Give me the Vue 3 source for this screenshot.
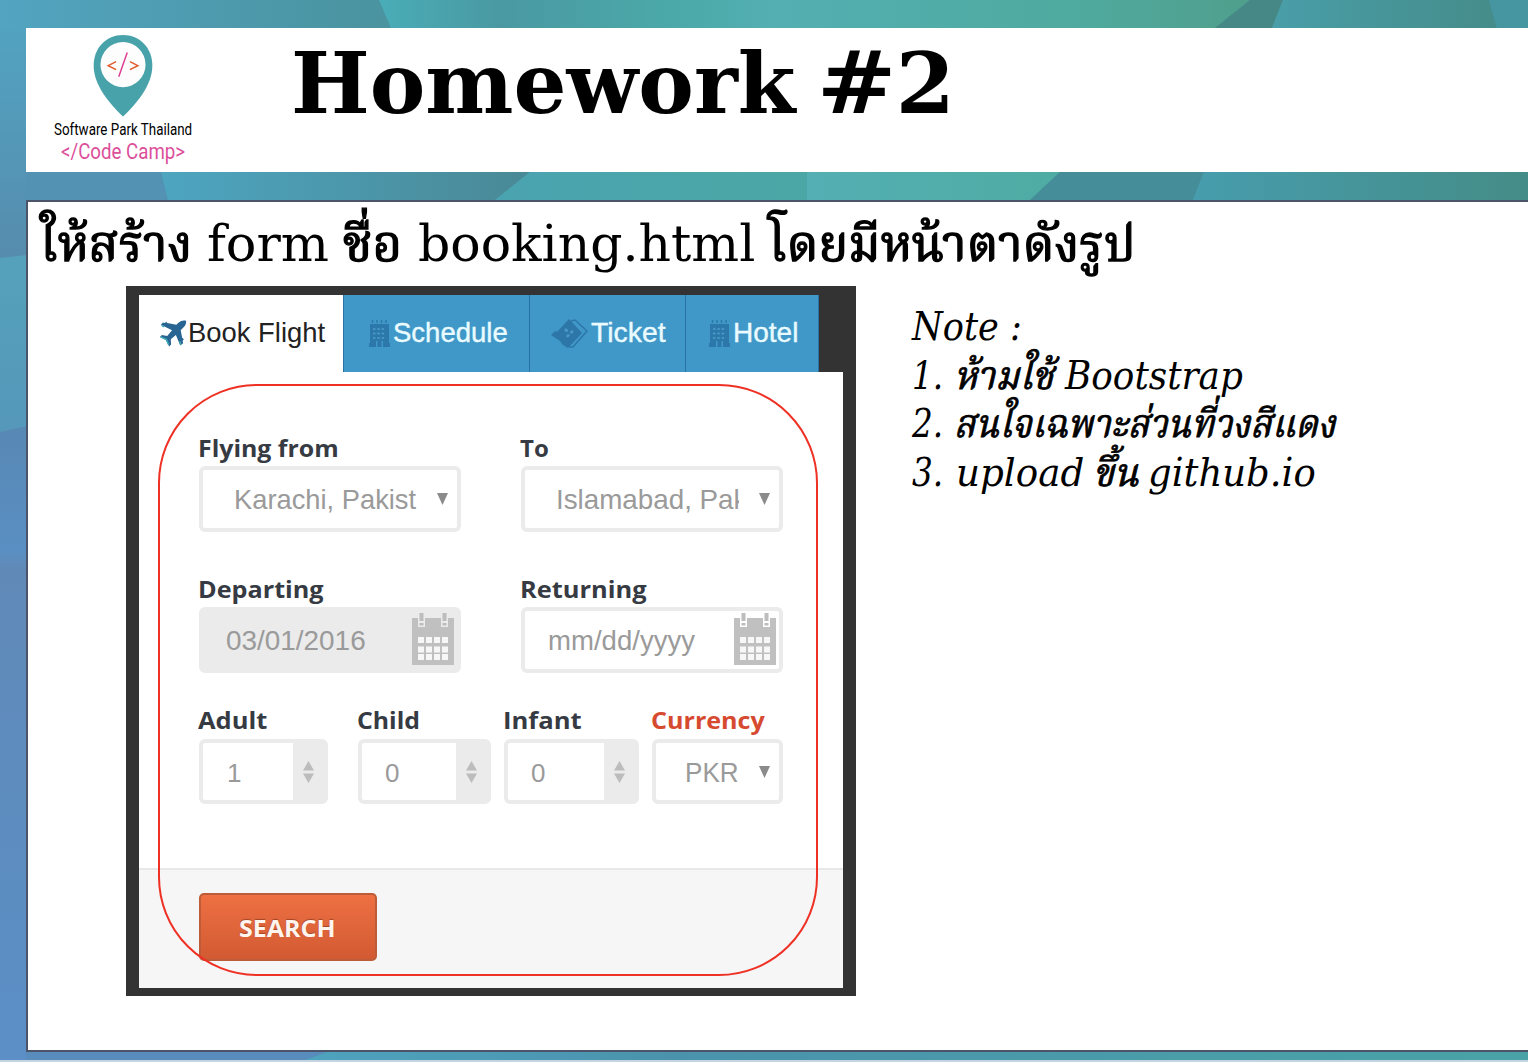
<script setup>
// Stretches a run of text horizontally so that it spans the given width.
const vFit = {
  mounted(el, { value }) {
    const natural = el.offsetWidth
    if (!natural) return
    el.style.transform = `scaleX(${value / natural})`
    el.style.marginRight = `${value - natural}px`
  },
}

const heading = [
  { text: 'ให้สร้าง', width: 152, gap: 0, thai: true },
  { text: 'form', width: 122, gap: 15 },
  { text: 'ชื่อ', width: 59, gap: 14, thai: true },
  { text: 'booking.html', width: 337, gap: 16 },
  { text: 'โดยมีหน้าตาดังรูป', width: 367, gap: 12, thai: true },
]

const notes = [
  [{ text: 'Note :', width: 110, gap: 0 }],
  [
    { text: '1.', width: 31, gap: 0 },
    { text: 'ห้ามใช้', width: 100, gap: 11, thai: true },
    { text: 'Bootstrap', width: 178, gap: 11 },
  ],
  [
    { text: '2.', width: 31, gap: 0 },
    { text: 'สนใจเฉพาะส่วนที่วงสีแดง', width: 382, gap: 11, thai: true },
  ],
  [
    { text: '3.', width: 31, gap: 0 },
    { text: 'upload', width: 128, gap: 13 },
    { text: 'ขึ้น', width: 46, gap: 9, thai: true },
    { text: 'github.io', width: 168, gap: 9 },
  ],
]

const counters = [
  { label: 'Adult', value: '1', cls: 'adult', fit: 69 },
  { label: 'Child', value: '0', cls: 'child', fit: 63 },
  { label: 'Infant', value: '0', cls: 'infant', fit: 79 },
]
</script>

<template>
  <div class="slide">
    <svg class="backdrop" viewBox="0 0 1528 1062" preserveAspectRatio="none" aria-hidden="true">
      <defs>
        <linearGradient id="gTop" gradientUnits="userSpaceOnUse" x1="0" x2="390"><stop offset="0" stop-color="#52a4c0" /><stop offset="1" stop-color="#4a939f" /></linearGradient>
        <linearGradient id="gTop2" gradientUnits="userSpaceOnUse" x1="379" x2="1250"><stop offset="0" stop-color="#49adb7" /><stop offset=".14" stop-color="#4a99a2" /><stop offset=".34" stop-color="#4ba9a9" /><stop offset=".45" stop-color="#53afb2" /><stop offset=".8" stop-color="#4faa9f" /><stop offset="1" stop-color="#509f8c" /></linearGradient>
        <linearGradient id="gTop3" gradientUnits="userSpaceOnUse" x1="1272" x2="1497"><stop offset="0" stop-color="#499ea8" /><stop offset="1" stop-color="#458c8a" /></linearGradient>
        <linearGradient id="gMid" gradientUnits="userSpaceOnUse" x1="161" x2="530"><stop offset="0" stop-color="#4da5c0" /><stop offset="1" stop-color="#4a8996" /></linearGradient>
        <linearGradient id="gMid2" gradientUnits="userSpaceOnUse" x1="495" x2="807"><stop offset="0" stop-color="#4aa3b0" /><stop offset="1" stop-color="#4ba7a5" /></linearGradient>
        <linearGradient id="gMid3" gradientUnits="userSpaceOnUse" x1="807" x2="1060"><stop offset="0" stop-color="#53afb3" /><stop offset="1" stop-color="#4eaca3" /></linearGradient>
        <linearGradient id="gMid4" gradientUnits="userSpaceOnUse" x1="1193" x2="1528"><stop offset="0" stop-color="#479dad" /><stop offset="1" stop-color="#448c87" /></linearGradient>
        <linearGradient id="gLeft" gradientUnits="userSpaceOnUse" x1="0" x2="0" y1="28" y2="258"><stop offset="0" stop-color="#52a3c0" /><stop offset="1" stop-color="#568cae" /></linearGradient>
        <linearGradient id="gLeft2" gradientUnits="userSpaceOnUse" x1="0" x2="0" y1="258" y2="430"><stop offset="0" stop-color="#55a1bb" /><stop offset="1" stop-color="#5598b9" /></linearGradient>
        <linearGradient id="gLeft3" gradientUnits="userSpaceOnUse" x1="0" x2="0" y1="430" y2="1062"><stop offset="0" stop-color="#5888b4" /><stop offset=".19" stop-color="#5a8fc3" /><stop offset=".22" stop-color="#6089b7" /><stop offset=".5" stop-color="#5e8cbe" /><stop offset="1" stop-color="#5b8fc6" /></linearGradient>
        <linearGradient id="gBottom" gradientUnits="userSpaceOnUse" x1="300" x2="1528"><stop offset="0" stop-color="#4fa3bd" /><stop offset=".3" stop-color="#4b93ad" /><stop offset="1" stop-color="#49a3a6" /></linearGradient>
      </defs>
      <rect width="1528" height="1062" fill="#4b98a5" />
      <rect width="391" height="28" fill="url(#gTop)" />
      <path d="M379 0H1250L1215 28H391Z" fill="url(#gTop2)" />
      <path d="M1250 0H1283L1272 28H1215Z" fill="#458885" />
      <path d="M1283 0H1489L1497 28H1272Z" fill="url(#gTop3)" />
      <path d="M1489 0H1528V28H1497Z" fill="#4596a1" />
      <rect y="28" width="27" height="231" fill="url(#gLeft)" />
      <path d="M26 172H161L168 200H26Z" fill="#5492b4" />
      <path d="M161 172H530L495 200H168Z" fill="url(#gMid)" />
      <path d="M530 172H808V200H495Z" fill="url(#gMid2)" />
      <path d="M807 172H1060L1030 200H807Z" fill="url(#gMid3)" />
      <path d="M1060 172H1204L1193 200H1030Z" fill="#458e99" />
      <path d="M1204 172H1528V200H1193Z" fill="url(#gMid4)" />
      <path d="M0 258L27 255V432H0Z" fill="url(#gLeft2)" />
      <path d="M0 432L27 426V1062H0Z" fill="url(#gLeft3)" />
      <path d="M26 1051H330L300 1062H26Z" fill="#588cbd" />
      <path d="M330 1051H1528V1062H300Z" fill="url(#gBottom)" />
      <rect y="1060" width="1528" height="2" fill="#c3d4e2" />
    </svg>

    <header class="banner">
      <div class="logo">
        <svg class="pin" viewBox="0 0 60 83" aria-hidden="true">
          <path d="M30 0C13 0 .3 13 .3 31C.3 51 17 70 30 82.500C43 70 59.700 51 59.700 31C59.700 13 47 0 30 0Z" fill="#48a2a9" />
          <circle cx="30" cy="30" r="22.800" fill="#fdfdfd" />
          <path d="M23 27L15 31L23 35M37 27L45 31L37 35" fill="none" stroke="#e0592a" stroke-width="1.500" />
          <path d="M34.300 17.800L25.700 42.200" stroke="#dc3f92" stroke-width="1.500" />
        </svg>
        <div class="org"><span v-fit="138" class="run">Software Park Thailand</span></div>
        <div class="camp"><span v-fit="124" class="run">&lt;/Code Camp&gt;</span></div>
      </div>
      <h1 class="title"><span v-fit="505" class="run">Homework</span><span v-fit="79" class="run hash">#</span><span v-fit="59" class="run">2</span></h1>
    </header>

    <main class="sheet">
      <p class="heading">
        <span v-for="(w, i) in heading" :key="i" :style="{ paddingLeft: w.gap + 'px' }"><span v-fit="w.width" class="run" :class="{ thai: w.thai }">{{ w.text }}</span></span>
      </p>

      <div class="columns">
        <section class="photo">
          <nav class="tabs">
            <div class="tab active">
              <svg class="plane" viewBox="0 0 28 28" aria-hidden="true">
                <path d="M27.500 .8C25 -.2 22 .7 20 2.700L17.500 5L8 3.200L7 1.800L5.500 3L3.500 2.500L1.500 5L13 10.500L8 16.500L2.500 15.500L.5 17.500L6.500 20.800L10 27.500L12 25.500L11.700 20L17 15.500L21.500 26.500L24.500 24L24 21.500L25.300 20L23.500 18.500L22 10.700L25 7.500C27.200 5.300 28 3 27.500 .8Z" fill="#286592" />
                <path d="M2 5.500L5 7M1 17.500L7 20L9.500 25.500M21 22L22 25.500" stroke="#42aab8" stroke-width="1.500" fill="none" />
              </svg>
              <span v-fit="137" class="run">Book Flight</span>
            </div>
            <div class="tab schedule">
              <svg class="building" viewBox="0 0 21 27" aria-hidden="true">
                <path d="M1 4H20V23H21V27H14V21H12.500V27H8.500V21H7V27H0V23H1Z" fill="#2c78ab" />
                <path d="M3.500 0V3M8 0V3M12.500 0V3M17 0V3" stroke="#2c78ab" stroke-width="1.500" />
                <path d="M4 9H17M4 13.500H17M4 18H17" stroke="#4b9fc9" stroke-width="1.500" stroke-dasharray="2.500 1.800" />
              </svg>
              <span v-fit="115" class="run">Schedule</span>
            </div>
            <div class="tab ticket">
              <svg class="tickets" viewBox="0 0 37 29" aria-hidden="true">
                <path d="M0 16L4 12L6 13L18 0L31 14L17 29L12 26L9 22L6 20Z" fill="#2c76a8" />
                <path d="M20 2L24 1L36 12L22 28L18 28" fill="none" stroke="#2c76a8" stroke-width="1.500" />
                <path d="M14 10L16.500 12.500M22 12L19.500 14M16 18L18 15.500" fill="none" stroke="#4a9ac5" stroke-width="2.500" />
              </svg>
              <span v-fit="75" class="run">Ticket</span>
            </div>
            <div class="tab hotel">
              <svg class="building" viewBox="0 0 21 27" aria-hidden="true">
                <path d="M1 4H20V23H21V27H14V21H12.500V27H8.500V21H7V27H0V23H1Z" fill="#2c78ab" />
                <path d="M3.500 0V3M8 0V3M12.500 0V3M17 0V3" stroke="#2c78ab" stroke-width="1.500" />
                <path d="M4 9H17M4 13.500H17M4 18H17" stroke="#4b9fc9" stroke-width="1.500" stroke-dasharray="2.500 1.800" />
              </svg>
              <span v-fit="65" class="run">Hotel</span>
            </div>
          </nav>

          <form class="form" @submit.prevent>
            <div class="row">
              <div class="cell wide">
                <label><span v-fit="141" class="run">Flying from</span></label>
                <div class="box select"><span class="clip"><span v-fit="182" class="run">Karachi, Pakist</span></span><svg class="caret" viewBox="0 0 11 12"><path d="M0 0H11L5.500 12Z" /></svg></div>
              </div>
              <div class="cell wide">
                <label><span v-fit="29" class="run">To</span></label>
                <div class="box select"><span class="clip"><span v-fit="191" class="run">Islamabad, Pak</span></span><svg class="caret" viewBox="0 0 11 12"><path d="M0 0H11L5.500 12Z" /></svg></div>
              </div>
            </div>
            <div class="row dates">
              <div class="cell wide">
                <label><span v-fit="126" class="run">Departing</span></label>
                <div class="box date disabled">
                  <span v-fit="140" class="run">03/01/2016</span>
                  <svg class="calendar" viewBox="0 0 42 52"><path d="M0 5H42V52H0Z" fill="#c0c0c0" /><path d="M6 0H13V14H6ZM29 0H36V14H29Z" class="gap" /><path d="M7.500 0H11.500V8H7.500ZM30.500 0H34.500V8H30.500ZM7.500 10H11.500V12.500H7.500ZM30.500 10H34.500V12.500H30.500Z" fill="#bdbdbd" /><path d="M6 27H36M6 36.500H36M6 44H36" class="days" /></svg>
                </div>
              </div>
              <div class="cell wide">
                <label><span v-fit="127" class="run">Returning</span></label>
                <div class="box date">
                  <span v-fit="147" class="run">mm/dd/yyyy</span>
                  <svg class="calendar" viewBox="0 0 42 52"><path d="M0 5H42V52H0Z" fill="#c0c0c0" /><path d="M6 0H13V14H6ZM29 0H36V14H29Z" class="gap" /><path d="M7.500 0H11.500V8H7.500ZM30.500 0H34.500V8H30.500ZM7.500 10H11.500V12.500H7.500ZM30.500 10H34.500V12.500H30.500Z" fill="#bdbdbd" /><path d="M6 27H36M6 36.500H36M6 44H36" class="days" /></svg>
                </div>
              </div>
            </div>
            <div class="row people">
              <div v-for="c in counters" :key="c.label" class="cell" :class="c.cls">
                <label><span v-fit="c.fit" class="run">{{ c.label }}</span></label>
                <div class="box counter">
                  <span class="num">{{ c.value }}</span>
                  <span class="stepper"><svg viewBox="0 0 11 22"><path d="M5.500 0L11 9.500H0ZM0 12.500H11L5.500 22Z" fill="#bcbcbc" /></svg></span>
                </div>
              </div>
              <div class="cell currency">
                <label><span v-fit="114" class="run">Currency</span></label>
                <div class="box select"><span class="clip"><span v-fit="54" class="run">PKR</span></span><svg class="caret" viewBox="0 0 11 12"><path d="M0 0H11L5.500 12Z" /></svg></div>
              </div>
            </div>
          </form>

          <footer class="actions">
            <button type="submit" class="search"><span v-fit="97" class="run">SEARCH</span></button>
          </footer>
          <div class="ring"></div>
        </section>

        <aside class="notes">
          <p v-for="(line, n) in notes" :key="n">
            <span v-for="(w, i) in line" :key="i" :style="{ paddingLeft: w.gap + 'px' }"><span v-fit="w.width" class="run" :class="{ thai: w.thai }">{{ w.text }}</span></span>
          </p>
        </aside>
      </div>
    </main>
  </div>
</template>

<style>
body {
  margin: 0;
  overflow: hidden;
}
</style>

<style scoped>
.slide {
  position: relative;
  box-sizing: border-box;
  width: 1528px;
  height: 1062px;
  padding: 28px 0 0 26px;
  overflow: hidden;
  color: #000;
}
.backdrop {
  position: absolute;
  inset: 0;
  width: 1528px;
  height: 1062px;
}
.run {
  display: inline-block;
  white-space: pre;
  transform-origin: 0 50%;
}
.banner {
  position: relative;
  display: flex;
  height: 144px;
  background: #fff;
}
.logo {
  width: 193px;
  padding-top: 7px;
  display: flex;
  flex-direction: column;
  align-items: center;
  font-family: Roboto, sans-serif;
  white-space: nowrap;
}
.pin {
  width: 60px;
  height: 82px;
}
.org {
  height: 22px;
  margin: 2px 0 0 1px;
  line-height: 22px;
  font-size: 16px;
}
.camp {
  height: 22px;
  margin-left: 1px;
  line-height: 22px;
  font-size: 22px;
  color: #dc4f9b;
}
.title {
  display: flex;
  margin: 0 0 0 72px;
  font: bold 85px/110px "DejaVu Serif", serif;
  white-space: nowrap;
}
.hash {
  margin-left: 21px;
  font-weight: normal;
  -webkit-text-stroke: 2px #000;
}
.sheet {
  position: relative;
  box-sizing: border-box;
  width: 1504px;
  height: 852px;
  margin-top: 28px;
  border: 2px solid #4b5468;
  background: #fff;
}
.heading {
  display: flex;
  height: 84px;
  margin: 0;
  padding-left: 12px;
  font: 50px/84px "DejaVu Serif", "Noto Serif Thai", serif;
  white-space: nowrap;
}
.heading .thai { -webkit-text-stroke: 1.3px #000; }
.notes .thai { -webkit-text-stroke: 0.8px #000; }
.columns {
  display: flex;
  padding-left: 98px;
}
.photo {
  position: relative;
  box-sizing: border-box;
  width: 730px;
  height: 710px;
  padding: 9px 13px 8px;
  background: #333;
}
.tabs {
  display: flex;
  height: 77px;
  font: 28px/76px "Liberation Sans", sans-serif;
}
.tab {
  box-sizing: border-box;
  display: flex;
  align-items: center;
  padding-bottom: 1px;
  background: #4098c8;
  border-left: 1.500px solid #2873a3;
  color: #e9fbff;
  -webkit-text-stroke: 0.4px #e9fbff;
}
.tab.active {
  width: 204px;
  padding-left: 20px;
  border: 0;
  background: #fff;
  color: #222;
  -webkit-text-stroke: 0;
}
.schedule { width: 186px; padding-left: 25px; }
.ticket { width: 156px; padding-left: 21px; }
.hotel { width: 134px; padding-left: 23px; border-right: 1px solid #2873a3; }
.plane { width: 28px; height: 27px; margin-right: 1px; }
.building { width: 21px; height: 27px; margin-right: 3px; }
.tickets { width: 37px; height: 29px; margin-right: 3px; }
.form {
  box-sizing: border-box;
  height: 496px;
  padding: 61px 0 0 60px;
  background: #fff;
}
.row {
  display: flex;
  gap: 60px;
  height: 141px;
}
.dates { height: 131px; }
.people { gap: 0; height: 110px; }
.cell label {
  display: block;
  height: 33px;
  margin-left: -1px;
  font: bold 24px/30px "Open Sans", sans-serif;
  color: #363a42;
  white-space: nowrap;
}
.people .cell label { height: 34px; }
.wide { width: 262px; }
.adult { width: 129px; margin-right: 30px; }
.child { width: 133px; margin-right: 13px; }
.infant { width: 135px; margin-right: 13px; }
.currency { width: 131px; }
.cell.currency label { color: #d64a2f; }
.box {
  box-sizing: border-box;
  display: flex;
  align-items: center;
  height: 66px;
  border: 4px solid #ebebeb;
  border-radius: 6px;
  background: #fff;
  font: 28.500px/58px "Liberation Sans", sans-serif;
  color: #9a9a9a;
}
.select {
  justify-content: space-between;
  padding: 0 9px 0 31px;
}
.clip {
  width: 183px;
  overflow: hidden;
  white-space: nowrap;
}
.currency .select { padding-left: 29px; }
.currency .clip { width: 56px; }
.caret {
  width: 11px;
  height: 12px;
  fill: #8b8b8b;
}
.date {
  justify-content: space-between;
  padding: 0 3px 0 23px;
}
.disabled { background: #ebebeb; }
.calendar { width: 42px; height: 52px; margin-top: -3px; }
.gap { fill: #fff; }
.disabled .gap { fill: #ebebeb; }
.days {
  fill: none;
  stroke: #f7f7f7;
  stroke-width: 6;
  stroke-dasharray: 6 2;
}
.counter {
  justify-content: space-between;
  height: 65px;
  padding-left: 23px;
  font-size: 26px;
}
.num { padding-top: 2px; }
.adult .num { padding-left: 1px; }
.stepper {
  display: flex;
  align-items: center;
  justify-content: center;
  width: 31px;
  height: 57px;
  background: #ebebeb;
}
.stepper svg { width: 11px; height: 22px; }
.currency .box { height: 65px; }
.actions {
  box-sizing: border-box;
  height: 120px;
  padding: 23px 0 0 60px;
  border-top: 2px solid #e8e8e8;
  background: #f6f6f6;
}
.search {
  box-sizing: border-box;
  display: flex;
  width: 178px;
  height: 68px;
  padding: 0 0 0 38px;
  border: 2px solid #bd5c38;
  border-radius: 5px;
  background: linear-gradient(#ee7043, #d25a32);
  font: bold 24px/65px "Open Sans", sans-serif;
  color: #fff4ee;
  text-shadow: 0 -1px 1px #a34625;
}
.ring {
  position: absolute;
  box-sizing: border-box;
  left: 32px;
  top: 98px;
  width: 660px;
  height: 592px;
  border: 2px solid #ee3124;
  border-radius: 99px;
}
.notes {
  padding: 17px 0 0 56px;
  font: italic 39px/48.700px "DejaVu Serif", "Noto Serif Thai", serif;
}
.notes p {
  display: flex;
  height: 48.700px;
  margin: 0;
  white-space: nowrap;
}
</style>
